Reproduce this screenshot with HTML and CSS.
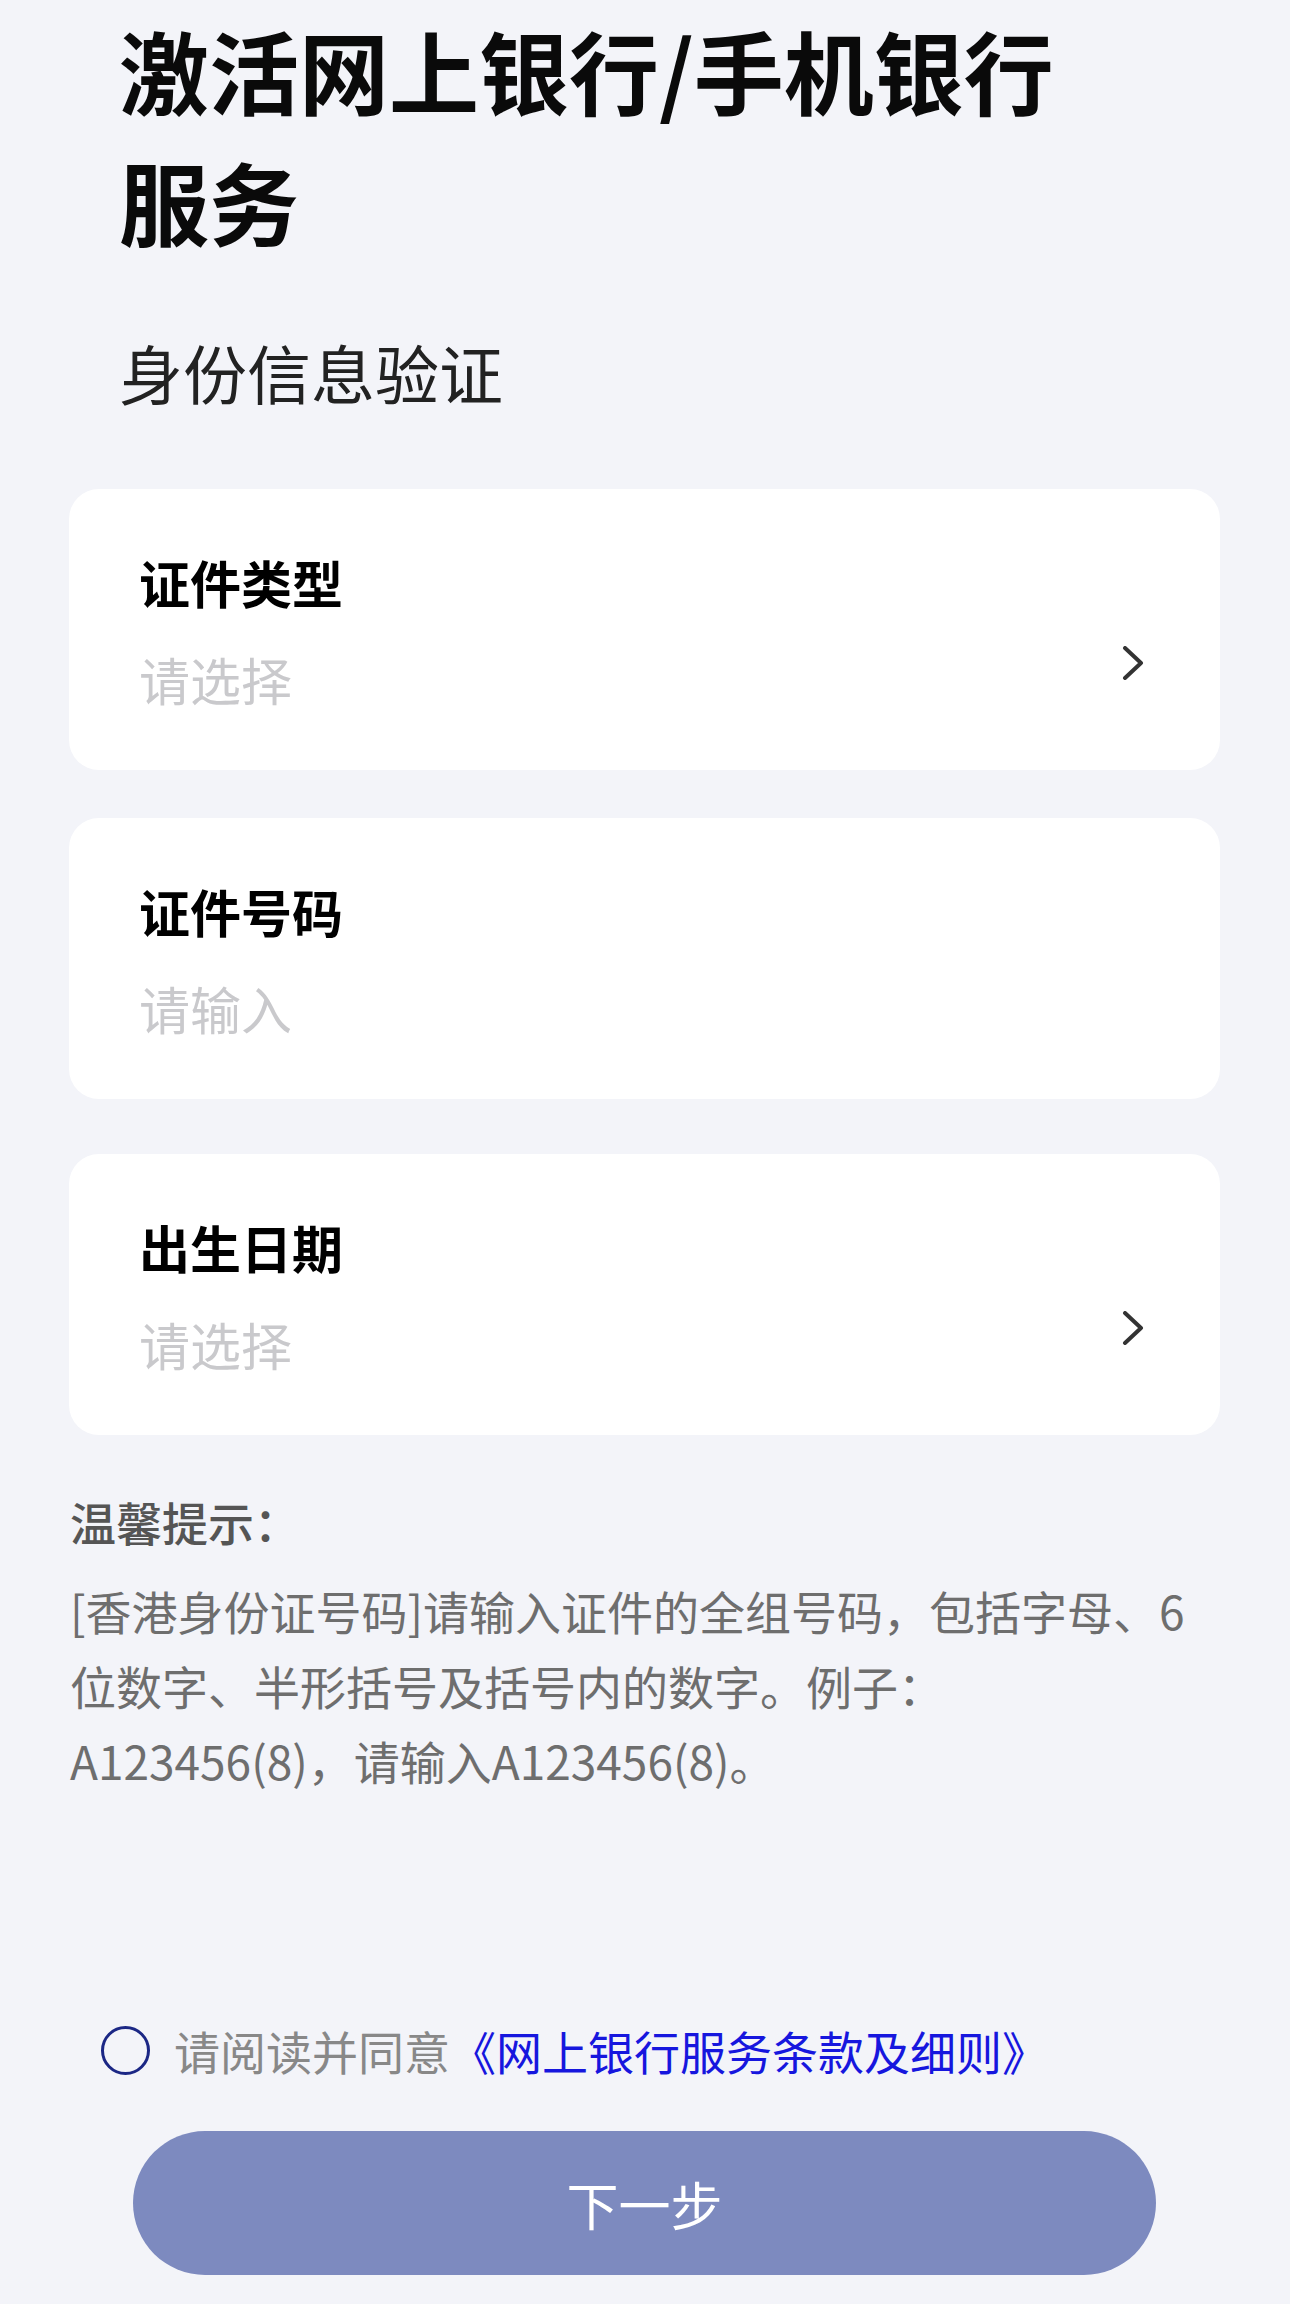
FILE: index.html
```html
<!DOCTYPE html>
<html lang="zh-CN">
<head>
<meta charset="utf-8">
<title>激活网上银行/手机银行服务</title>
<link rel="stylesheet" href="styles.css">
</head>
<body>
<div class="page">
  <h1 class="title">激活网上银行/手机银行服务</h1>
  <h2 class="subtitle">身份信息验证</h2>

  <div class="fields">
    <div class="card">
      <div class="label">证件类型</div>
      <div class="value-row">
        <span class="placeholder">请选择</span>
        <svg class="chevron" width="24" height="34" viewBox="0 0 24 34"><path d="M4 2 L20 17 L4 32" fill="none" stroke="#333" stroke-width="4" stroke-linecap="round" stroke-linejoin="round"/></svg>
      </div>
    </div>
    <div class="card">
      <div class="label">证件号码</div>
      <div class="value-row">
        <span class="placeholder">请输入</span>
      </div>
    </div>
    <div class="card card-last">
      <div class="label">出生日期</div>
      <div class="value-row">
        <span class="placeholder">请选择</span>
        <svg class="chevron" width="24" height="34" viewBox="0 0 24 34"><path d="M4 2 L20 17 L4 32" fill="none" stroke="#333" stroke-width="4" stroke-linecap="round" stroke-linejoin="round"/></svg>
      </div>
    </div>
  </div>

  <div class="tips">
    <div class="tips-head">温馨提示：</div>
    <p class="tips-body">[香港身份证号码]请输入证件的全组号码，包括字母、6位数字、半形括号及括号内的数字。例子：A123456(8)，请输入A123456(8)。</p>
  </div>

  <div class="agree">
    <span class="radio"></span>
    <span class="agree-text">请阅读并同意<span class="link">《网上银行服务条款及细则》</span></span>
  </div>

  <button class="next">下一步</button>
</div>
</body>
</html>
```

FILE: styles.css
```css
html, body {
  margin: 0;
  padding: 0;
  background: #f3f4f9;
}
body {
  font-family: "Noto Sans CJK SC", "Noto Sans", sans-serif;
  width: 1290px;
  height: 2304px;
  overflow: hidden;
}
.page {
  padding: 4px 70px 0 69px;
}
.title {
  margin: 0 0 0 50px;
  font-size: 90px;
  line-height: 131px;
  font-weight: 700;
  color: #0a0a0a;
  width: 1000px;
}
.subtitle {
  margin: 60px 0 0 50px;
  font-size: 64px;
  line-height: 90px;
  font-weight: 400;
  color: #222;
}
.fields {
  margin-top: 73px;
  display: flex;
  flex-direction: column;
  gap: 48px;
}
.card {
  background: #fff;
  border-radius: 30px;
  padding: 60px 75px 58px 70px;
}
.card-last {
  margin-top: 7px;
}
.label {
  font-size: 51px;
  line-height: 66px;
  font-weight: 700;
  color: #000;
}
.value-row {
  margin-top: 31px;
  display: flex;
  justify-content: space-between;
  align-items: flex-start;
  height: 66px;
}
.placeholder {
  font-size: 51px;
  line-height: 66px;
  color: #c9c9cc;
}
.chevron {
  display: block;
}
.tips {
  margin-top: 56px;
  padding-left: 1px;
}
.tips-head {
  font-size: 46px;
  line-height: 60px;
  font-weight: 500;
  color: #555;
}
.tips-body {
  margin: 22px 0 0 0;
  font-size: 46px;
  line-height: 75px;
  color: #6e6e6e;
}
.agree {
  margin-top: 222px;
  margin-left: 32px;
  display: flex;
  align-items: center;
  height: 60px;
}
.radio {
  width: 43px;
  height: 43px;
  border: 3px solid #1b2785;
  border-radius: 50%;
  flex: none;
}
.agree-text {
  margin-left: 24px;
  font-size: 46px;
  line-height: 60px;
  color: #888;
}
.link {
  color: #1616de;
}
.next {
  display: block;
  margin: 51px 64px 0 64px;
  width: calc(100% - 128px);
  height: 144px;
  border: none;
  border-radius: 72px;
  background: #7d8abf;
  color: #fff;
  font-family: "Noto Sans CJK SC", sans-serif;
  font-size: 52px;
  font-weight: 400;
}
```
